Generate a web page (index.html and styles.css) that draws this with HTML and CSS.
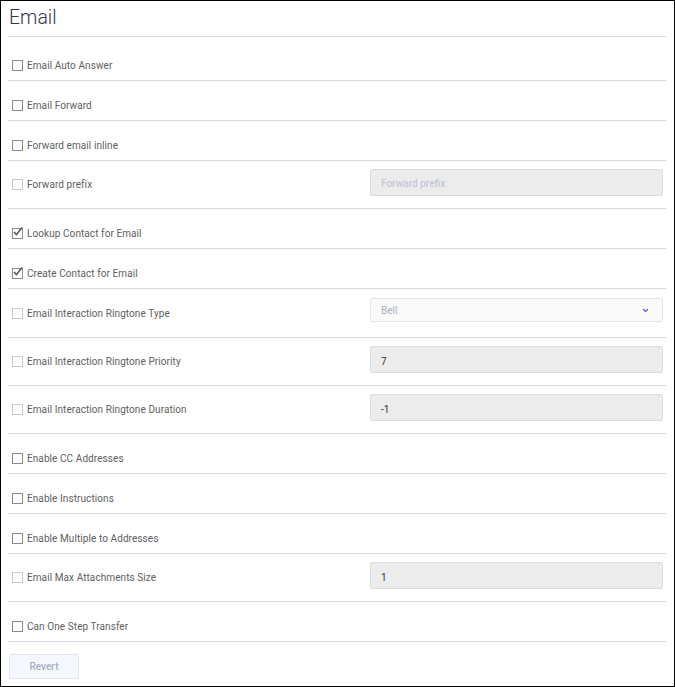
FILE: index.html
```html
<!DOCTYPE html>
<html>
<head>
<meta charset="utf-8">
<link rel="stylesheet" href="styles.css">
</head>
<body>
<div class="page">
  <div class="header"><h1 class="title">Email</h1></div>
  <div class="rows">
    <div class="row first"><label class="opt"><span class="cb"></span>Email Auto Answer</label></div>
    <div class="row"><label class="opt"><span class="cb"></span>Email Forward</label></div>
    <div class="row"><label class="opt"><span class="cb"></span>Forward email inline</label></div>
    <div class="row field"><label class="opt"><span class="cb dis"></span>Forward prefix</label><div class="input placeholder">Forward prefix</div></div>
    <div class="row"><label class="opt"><span class="cb checked"><svg viewBox="0 0 11 11" width="11" height="11"><path d="M2 5 L4.4 7.6 L10.2 0.6" fill="none" stroke="#5e5a55" stroke-width="1.6"/></svg></span>Lookup Contact for Email</label></div>
    <div class="row"><label class="opt"><span class="cb checked"><svg viewBox="0 0 11 11" width="11" height="11"><path d="M2 5 L4.4 7.6 L10.2 0.6" fill="none" stroke="#5e5a55" stroke-width="1.6"/></svg></span>Create Contact for Email</label></div>
    <div class="row field sel"><label class="opt"><span class="cb dis"></span>Email Interaction Ringtone Type</label><div class="select"><span>Bell</span><svg class="chev" viewBox="0 0 8 6" width="7" height="5"><path d="M1 1.2 L4 4.2 L7 1.2" fill="none" stroke="#5a5acf" stroke-width="1.4"/></svg></div></div>
    <div class="row field"><label class="opt"><span class="cb dis"></span>Email Interaction Ringtone Priority</label><div class="input">7</div></div>
    <div class="row field"><label class="opt"><span class="cb dis"></span>Email Interaction Ringtone Duration</label><div class="input">-1</div></div>
    <div class="row"><label class="opt"><span class="cb"></span>Enable CC Addresses</label></div>
    <div class="row"><label class="opt"><span class="cb"></span>Enable Instructions</label></div>
    <div class="row"><label class="opt"><span class="cb"></span>Enable Multiple to Addresses</label></div>
    <div class="row field"><label class="opt"><span class="cb dis"></span>Email Max Attachments Size</label><div class="input">1</div></div>
    <div class="row"><label class="opt"><span class="cb"></span>Can One Step Transfer</label></div>
  </div>
  <div class="actions"><button class="btn">Revert</button></div>
</div>
</body>
</html>
```
FILE: styles.css
```css
html, body {
  margin: 0;
  padding: 0;
  background: #fff;
}
body {
  font-family: Roboto, "Liberation Sans", Arial, sans-serif;
}
.page {
  box-sizing: border-box;
  width: 675px;
  height: 687px;
  border: 1px solid #000;
  padding: 0 8px 0 7px;
}
.header {
  height: 35px;
  border-bottom: 1px solid #d6d6d6;
}
.title {
  margin: 0;
  padding: 4px 0 0 1px;
  font-size: 19.5px;
  font-weight: 300;
  line-height: 26px;
  color: #3a3344;
}
.row {
  border-bottom: 1px solid #d6d6d6;
  padding: 17px 3px 6px 0;
  display: grid;
  grid-template-columns: 1fr 293px;
  column-gap: 14px;
}
.row.first {
  padding-top: 21px;
}
.row.field {
  padding: 8px 3px 12px 0;
  align-items: start;
}
.row.field .opt {
  padding-top: 8px;
}
.row.sel {
  padding: 9px 3px 15px 0;
}
.row.sel .opt {
  padding-top: 8px;
}
.opt {
  display: flex;
  align-items: center;
  height: 16px;
  line-height: 16px;
  font-size: 10px;
  letter-spacing: 0.08px;
  color: #606060;
  padding-left: 4px;
}
.cb {
  box-sizing: border-box;
  width: 11px;
  height: 11px;
  border: 1px solid #8c8c8c;
  background: #fff;
  margin-right: 4px;
  position: relative;
  flex: none;
  margin-top: -1px;
}
.cb.dis {
  border-color: #c9c9c9;
}
.cb svg {
  position: absolute;
  left: -1px;
  top: -2px;
}
.input {
  box-sizing: border-box;
  height: 27px;
  border: 1px solid #d9dde2;
  border-radius: 2px;
  background: #ececec;
  font-size: 10px;
  line-height: 29px;
  padding-left: 10px;
  color: #333;
}
.input.placeholder {
  color: #c2c9d3;
  font-weight: 500;
  line-height: 27px;
}
.select {
  box-sizing: border-box;
  height: 24px;
  border: 1px solid #e3e5e8;
  border-radius: 2px;
  background: #fafafa;
  font-size: 10px;
  line-height: 22px;
  padding: 1px 13px 0 10px;
  color: #a9b3c4;
  display: flex;
  justify-content: space-between;
  align-items: center;
}
.actions {
  padding: 12px 0 0 1px;
}
.btn {
  box-sizing: border-box;
  width: 70px;
  height: 25px;
  border: 1px solid #e0e6ee;
  border-radius: 2px;
  background: #f5f8fc;
  font-family: Roboto, "Liberation Sans", Arial, sans-serif;
  font-size: 10px;
  font-weight: 500;
  color: #a5b0c2;
  padding: 0;
}
```
